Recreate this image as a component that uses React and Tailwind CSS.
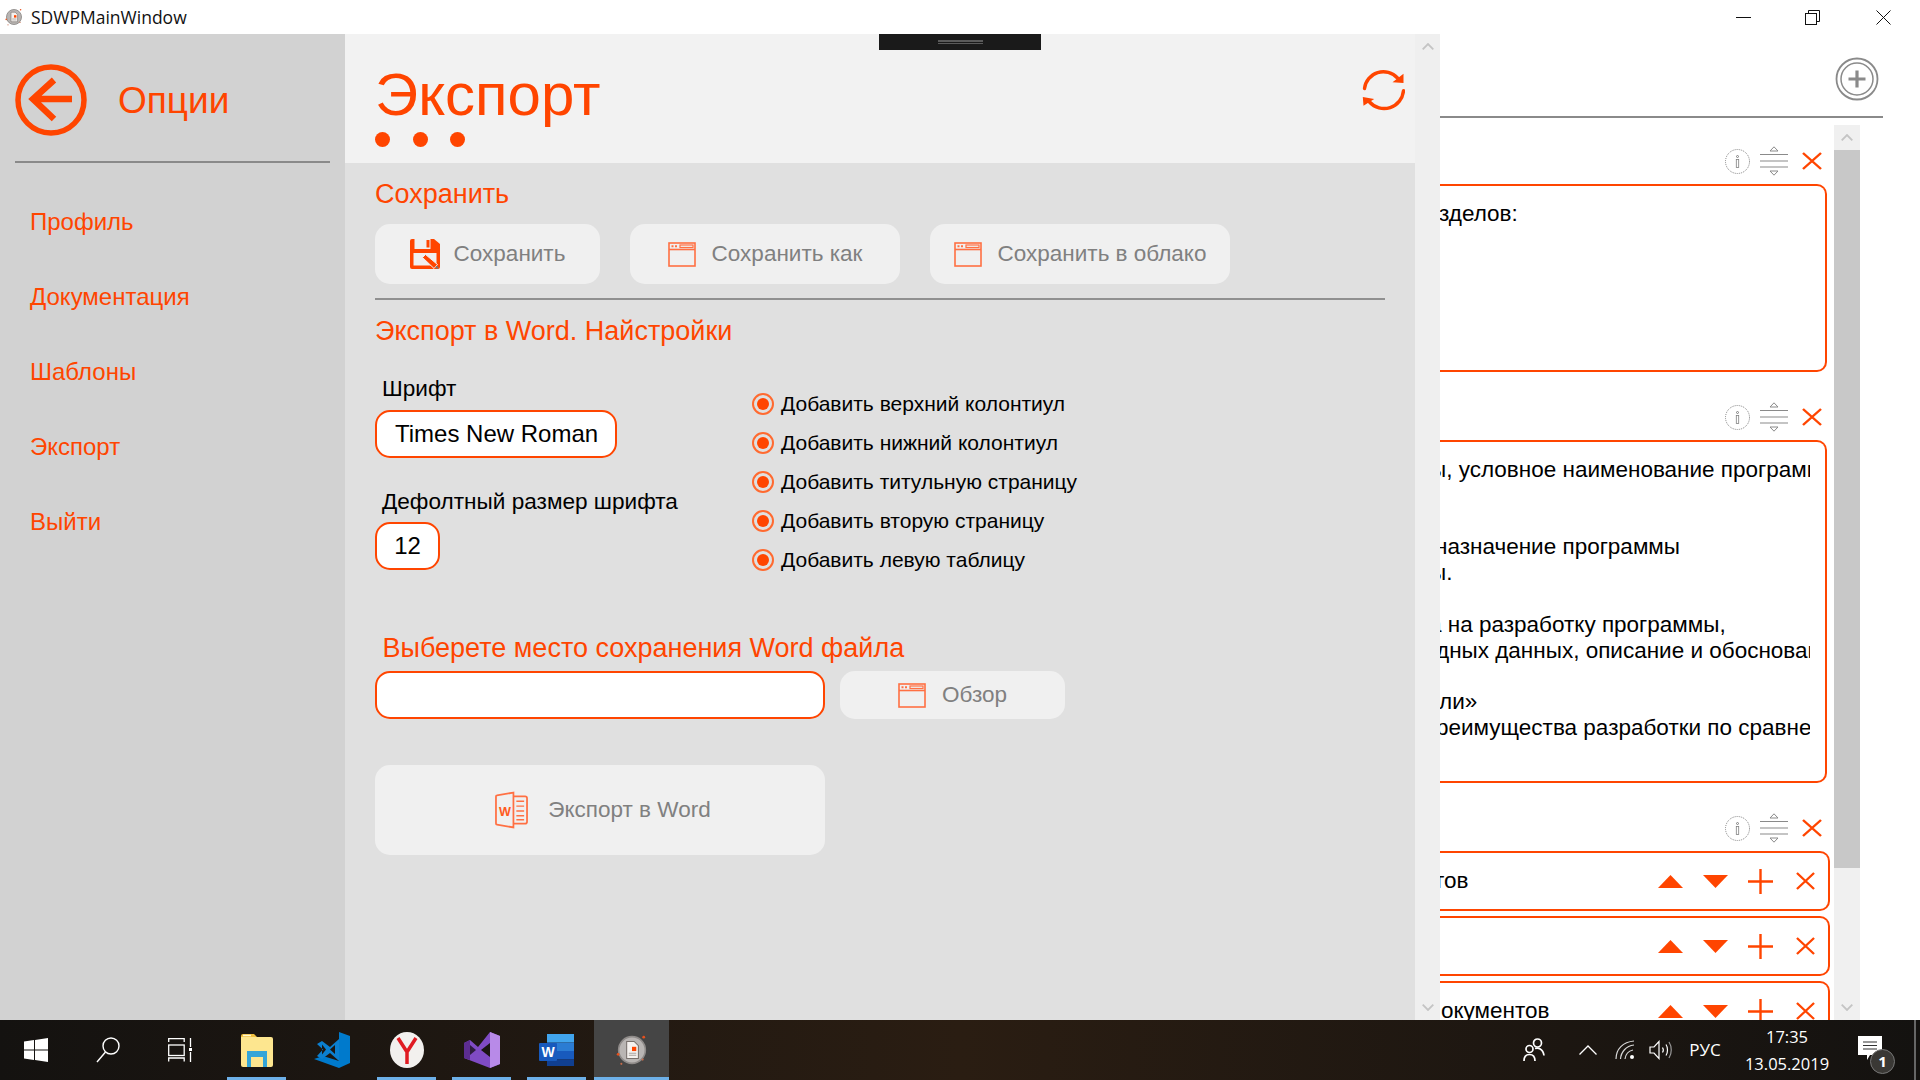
const navItems = ['Профиль', 'Документация', 'Шаблоны', 'Экспорт', 'Выйти'];
const radioItems = [
  'Добавить верхний колонтиул',
  'Добавить нижний колонтиул',
  'Добавить титульную страницу',
  'Добавить вторую страницу',
  'Добавить левую таблицу',
];

function AppIcon({ className }) {
  return (
    <svg viewBox="0 0 30 30" className={className}>
      <circle cx="15" cy="15" r="12.5" fill="#b9b5b3" stroke="#8f8b89" strokeWidth="1.5" />
      <path d="M10 7h7l4 4v12H10z" fill="#f4f1ee" stroke="#77706c" />
      <rect x="15" y="12" width="4" height="4" fill="#ff4500" />
      <path d="M12 18h7M12 20h7" stroke="#a9a29e" />
      <circle cx="26" cy="3" r="1.3" fill="#e8501c" />
      <circle cx="2" cy="19" r="1.3" fill="#e8501c" />
      <circle cx="5" cy="28" r="1" fill="#c46a4a" />
      <circle cx="25" cy="24" r="1" fill="#c46a4a" />
    </svg>
  );
}

function BackIcon() {
  return (
    <svg viewBox="0 0 72 72" className="w-[72px] h-[72px] shrink-0" fill="none" stroke="#ff4500">
      <circle cx="36" cy="36" r="33" strokeWidth="5.5" />
      <path d="M57 35H18M39 16 18 35l21 20" strokeWidth="6.5" />
    </svg>
  );
}

function RefreshIcon() {
  return (
    <svg viewBox="0 0 42 42" className="w-[43px] h-[42px]" fill="none">
      <path d="M2 19.5A19 19 0 0 1 35 9" stroke="#ff4500" strokeWidth="3.4" strokeLinecap="round" />
      <path d="M41 21.7A19.5 19.5 0 0 1 7 33" stroke="#ff4500" strokeWidth="3.4" strokeLinecap="round" />
      <path d="M41 4.7V14l-11-.7zM.3 28l.7 8.7L11.7 30z" fill="#ff4500" />
    </svg>
  );
}

function FloppyIcon() {
  return (
    <svg viewBox="0 0 30 30" className="w-[30px] h-[30px]">
      <path d="M2 0h22l6 5v23a2 2 0 0 1-2 2H2a2 2 0 0 1-2-2V2a2 2 0 0 1 2-2z" fill="#ff4500" />
      <rect x="4.500" y="0" width="16" height="10" fill="#f0f0f0" />
      <rect x="16.500" y="1" width="3" height="7.500" fill="#ff4500" />
      <rect x="3.500" y="14" width="23" height="12.500" fill="#f0f0f0" />
      <path d="M12.500 18.500l3-3 12 10-3.500 4z" fill="#ff4500" stroke="#f0f0f0" strokeWidth="1" />
      <path d="M26 27.500l2 2" stroke="#777" strokeWidth="2" />
    </svg>
  );
}

function WindowIcon() {
  return (
    <svg viewBox="0 0 28 25" className="w-[28px] h-[25px]" fill="none" stroke="#ff7043" strokeWidth="1.6">
      <rect x="1" y="1" width="26" height="23" />
      <path d="M1 7.500h26" />
      <rect x="12" y="3" width="13" height="2.500" strokeWidth="1.200" />
      <path d="M3.500 4.300h2M7 4.300h2" strokeWidth="2" />
    </svg>
  );
}

function WordDocIcon() {
  return (
    <svg viewBox="0 0 34 38" className="w-[33px] h-[38px]" fill="none" stroke="#ff7043" strokeWidth="1.8">
      <path d="M19 5h12a2 2 0 0 1 2 2v24a2 2 0 0 1-2 2H19" />
      <path d="M19 1 2 4a1 1 0 0 0-1 1v28a1 1 0 0 0 1 1l17 3z" />
      <path d="M22 10h8M22 15h8M22 20h8M22 25h8M22 29h8" strokeWidth="1.500" />
      <text x="4" y="25" fontSize="13" fontWeight="700" fill="#ff5a20" stroke="none" fontFamily="Liberation Sans">W</text>
    </svg>
  );
}

function InfoIcon() {
  return (
    <svg viewBox="0 0 25 25" className="w-[25px] h-[25px]" fill="none" stroke="#808080">
      <circle cx="12.500" cy="12.500" r="12" strokeDasharray="1 1" />
      <circle cx="12.500" cy="7.500" r="1" />
      <rect x="11.300" y="10.500" width="2.400" height="8" strokeWidth="0.800" />
    </svg>
  );
}

function CollapseIcon() {
  return (
    <svg viewBox="0 0 28 30" className="w-[28px] h-[30px]" fill="none" stroke="#8a8a8a">
      <path d="M14 .8 18 5h-8zM14 29.200 10 25h8z" />
      <path d="M0 8.500h28M0 15h28M0 21h28" strokeWidth="1.200" />
    </svg>
  );
}

function CloseIcon({ className }) {
  return (
    <svg viewBox="0 0 20 20" className={className} fill="none" stroke="#ff4500" strokeWidth="2.400" preserveAspectRatio="none">
      <path d="M1 1l18 18M19 1 1 19" />
    </svg>
  );
}

function CardIcons() {
  return (
    <div className="h-[46px] flex items-center justify-end pr-[12px]">
      <InfoIcon />
      <div className="w-[10px]" />
      <CollapseIcon />
      <div className="w-[14px]" />
      <CloseIcon className="w-[20px] h-[18px]" />
    </div>
  );
}

function RowIcons() {
  return (
    <div className="flex items-center">
      <div className="w-[45px] flex justify-center">
        <svg viewBox="0 0 25 13" className="w-[25px] h-[13px]"><path d="M12.500 0 25 13H0z" fill="#ff4500" /></svg>
      </div>
      <div className="w-[45px] flex justify-center">
        <svg viewBox="0 0 25 13" className="w-[25px] h-[13px]"><path d="M12.500 13 0 0h25z" fill="#ff4500" /></svg>
      </div>
      <div className="w-[45px] flex justify-center">
        <svg viewBox="0 0 25 25" className="w-[25px] h-[25px]" fill="none" stroke="#ff4500" strokeWidth="2.400"><path d="M12.500 0v25M0 12.500h25" /></svg>
      </div>
      <div className="w-[45px] flex justify-center">
        <CloseIcon className="w-[19px] h-[18px]" />
      </div>
    </div>
  );
}

function ActionButton({ icon, label, className }) {
  return (
    <div className={`bg-[#f0f0f0] rounded-[15px] flex items-center justify-center text-[#808080] text-[22.500px] ${className}`}>
      {icon}
      <span>{label}</span>
    </div>
  );
}

function ScrollArrow({ up }) {
  return (
    <div className="h-[25px] flex items-center justify-center">
      <svg viewBox="0 0 12 7" className="w-[12px] h-[7px]" fill="none" stroke="#c4c4c4" strokeWidth="1.800">
        <path d={up ? 'M.7 6.300 6 1l5.300 5.300' : 'M.7.700 6 6l5.300-5.300'} />
      </svg>
    </div>
  );
}

function TaskCell({ children, active, underline }) {
  return (
    <div className={`relative w-[75px] h-full flex items-center justify-center ${active ? 'bg-[#454545]' : ''}`}>
      {children}
      {underline && <div className={`absolute bottom-0 h-[3px] bg-[#6db0e8] ${active ? 'inset-x-0' : 'inset-x-[8px]'}`} />}
    </div>
  );
}

function Taskbar() {
  return (
    <div className="h-[60px] shrink-0 flex text-white bg-gradient-to-r from-[#141210] via-[#2a1d12] to-[#141210] font-['Open_Sans',sans-serif]">
      <div className="w-[72px] h-full flex items-center justify-center">
        <svg viewBox="0 0 24 24" className="w-[24px] h-[24px]" fill="#fff">
          <path d="M0 3.400 10 2v9.500H0zM11 1.900 24 0v11.500H11zM0 12.500h10V22L0 20.600zM11 12.500h13V24l-13-1.900z" />
        </svg>
      </div>
      <div className="w-[72px] h-full flex items-center justify-center">
        <svg viewBox="0 0 24 26" className="w-[24px] h-[26px]" fill="none" stroke="#fff" strokeWidth="1.400">
          <circle cx="15" cy="9" r="8" />
          <path d="M9.500 15 1 25" />
        </svg>
      </div>
      <div className="w-[72px] h-full flex items-center justify-center">
        <svg viewBox="0 0 24 24" className="w-[24px] h-[24px]" fill="none" stroke="#fff" strokeWidth="1.300">
          <path d="M.7 4V.7h15.500V4M.7 23.500V20h15.500v3.500" />
          <rect x=".7" y="7" width="15.500" height="10.500" />
          <path d="M22.500 0v9M22.500 14v10" />
          <rect x="21" y="10" width="3" height="3" fill="#fff" stroke="none" />
        </svg>
      </div>
      <div className="w-[3px]" />
      <TaskCell underline>
        <svg viewBox="0 0 32 34" className="w-[32px] h-[34px]">
          <path d="M0 3a2 2 0 0 1 2-2h11l3 3H0z" fill="#f0c040" />
          <path d="M0 4h30a2 2 0 0 1 2 2v26a2 2 0 0 1-2 2H2a2 2 0 0 1-2-2z" fill="#fde68f" />
          <path d="M2 2.500h8" stroke="#fff7cf" strokeWidth="1.500" />
          <path d="M6 34V18h20v16h-4V24H10v10z" fill="#34a5d8" />
        </svg>
      </TaskCell>
      <TaskCell>
        <svg viewBox="0 0 36 36" className="w-[36px] h-[36px]">
          <path d="M25 0l11 4v27l-11 5-25-9 9-3 16 5V0z" fill="#007acc" />
          <path d="M3 12l5-3 8 6 9-8v22l-9-8-8 6-5-3 6-6.500zM8 12.500v10l4-5zM21 13l-5 4.500 5 4.500z" fill="#0b7fd0" fillRule="evenodd" />
        </svg>
      </TaskCell>
      <TaskCell underline>
        <svg viewBox="0 0 34 36" className="w-[34px] h-[36px]" fill="none">
          <ellipse cx="17" cy="18" rx="17" ry="18" fill="#f2f0ee" />
          <path d="M8 6l9 14 9-14M17 20v12" stroke="#e01b22" strokeWidth="3.500" />
        </svg>
      </TaskCell>
      <TaskCell underline>
        <svg viewBox="0 0 36 36" className="w-[36px] h-[36px]">
          <path d="M26 0l10 4v28l-10 4-26-10V11l6-3 8 7z" fill="#7f4bc4" />
          <path d="M26 0l10 4v28l-10 4z" fill="#b88ae8" />
          <path d="M0 11l6-3v20l-6-2z" fill="#5c2d91" />
          <path d="M6 13v10l6-5z" fill="#2e1d3f" />
          <path d="M26 11v14l-9-7z" fill="#1a1512" />
        </svg>
      </TaskCell>
      <TaskCell underline>
        <svg viewBox="0 0 36 36" className="w-[36px] h-[36px]">
          <rect x="8" y="2" width="27" height="8.500" fill="#41a5ee" />
          <rect x="8" y="10.500" width="27" height="8.500" fill="#2b7cd3" />
          <rect x="8" y="19" width="27" height="8.500" fill="#185abd" />
          <rect x="8" y="27.500" width="27" height="6.500" fill="#103f91" />
          <rect x="0" y="11" width="18" height="18" rx="1" fill="#185abd" />
          <text x="9" y="25" textAnchor="middle" fontSize="14" fontWeight="700" fill="#fff" fontFamily="Liberation Sans">W</text>
        </svg>
      </TaskCell>
      <TaskCell active underline>
        <AppIcon className="w-[32px] h-[36px]" />
      </TaskCell>
      <div className="flex-1" />
      <div className="w-[48px] flex items-center justify-center">
        <svg viewBox="0 0 22 24" className="w-[22px] h-[24px]" fill="none" stroke="#fff" strokeWidth="1.700">
          <circle cx="14.500" cy="5" r="4" />
          <circle cx="6.500" cy="11" r="3.500" />
          <path d="M1 23c0-4 2-6.500 5.500-6.500S12 19 12 23M12 10.500c3-1 8 0 9 7" />
        </svg>
      </div>
      <div className="w-[12px]" />
      <div className="w-[36px] flex items-center justify-center">
        <svg viewBox="0 0 18 10" className="w-[18px] h-[10px]" fill="none" stroke="#fff" strokeWidth="1.300"><path d="M.5 9.500 9 1l8.500 8.500" /></svg>
      </div>
      <div className="w-[37px] flex items-center justify-center">
        <svg viewBox="0 0 20 20" className="w-[20px] h-[20px]" fill="none" stroke="#d8d8d8" strokeWidth="1.200">
          <path d="M1 19C1 9 8 2 19 1M5.500 19C6 12 11 6 19 5M10 19c.5-4 3-8 8-9" />
          <circle cx="17" cy="17" r="2" fill="#fff" stroke="none" />
        </svg>
      </div>
      <div className="w-[35px] flex items-center justify-center">
        <svg viewBox="0 0 23 20" className="w-[23px] h-[20px]" fill="none" stroke="#fff" strokeWidth="1.200">
          <path d="M1 7h4l5-5.500v17L5 13H1z" />
          <path d="M13.500 7.500c1 1.500 1 3.500 0 5M17 4.500c2 3 2 8 0 11" />
          <path d="M20 2c3 4.500 3 11.500 0 16" stroke="#999" />
        </svg>
      </div>
      <div className="w-[54px] flex items-center justify-center text-[17px]">РУС</div>
      <div className="w-[110px] flex flex-col items-center justify-center text-[16.500px] leading-[27px]">
        <span>17:35</span>
        <span>13.05.2019</span>
      </div>
      <div className="w-[4px]" />
      <div className="relative w-[48px] flex items-center justify-center">
        <svg viewBox="0 0 24 24" className="w-[24px] h-[24px] -mt-[4px]">
          <path d="M0 0h24v19H12l-3 5v-5H0z" fill="#fff" />
          <path d="M5 6h14M5 9.500h14M5 13h14" stroke="#333" strokeWidth="1.200" />
        </svg>
        <div className="absolute left-[24px] top-[29px] w-[25px] h-[25px] rounded-full bg-[#3a3835] border border-[#777] flex items-center justify-center text-[15px] font-bold">1</div>
      </div>
      <div className="w-[20px]" />
      <div className="w-[2px] bg-[#666]" />
      <div className="w-[4px]" />
    </div>
  );
}

export default function App() {
  return (
    <div className="w-[1920px] h-[1080px] overflow-hidden flex flex-col bg-white font-['Liberation_Sans',sans-serif]">
      {/* title bar */}
      <div className="h-[34px] shrink-0 flex items-center pl-[5px] font-['Open_Sans',sans-serif]">
        <AppIcon className="w-[18px] h-[18px]" />
        <span className="ml-[8px] text-[17.500px] text-[#111]">SDWPMainWindow</span>
        <div className="flex-1" />
        <svg viewBox="0 0 15 1" className="w-[15px] h-[1px]"><rect width="15" height="1" fill="#111" /></svg>
        <div className="w-[54px]" />
        <svg viewBox="0 0 15 15" className="w-[15px] h-[15px]" fill="none" stroke="#111"><path d="M3.500 3V.500H14.500V11.500H12" /><rect x=".5" y="3.500" width="11" height="11" /></svg>
        <div className="w-[56px]" />
        <svg viewBox="0 0 15 15" className="w-[15px] h-[15px]" fill="none" stroke="#111"><path d="M.5.500l14 14M14.500.500l-14 14" /></svg>
        <div className="w-[29px]" />
      </div>

      <div className="relative flex-1 min-h-0 flex">
        {/* options panel */}
        <div className="w-[1440px] shrink-0 flex">
          <div className="w-[345px] shrink-0 bg-[#d2d2d2] px-[15px]">
            <div className="h-[129px] pt-[4px] flex items-center border-b-2 border-[#8a8a8a]">
              <BackIcon />
              <span className="ml-[31px] text-[37px] leading-[44px] pt-[2px] text-[#ff4500]">Опции</span>
            </div>
            <div className="mt-[21px] pl-[15px]">
              {navItems.map((item) => (
                <div key={item} className="h-[75px] flex items-center text-[24px] text-[#ff4500]">{item}</div>
              ))}
            </div>
          </div>

          <div className="w-[1070px] shrink-0 flex flex-col bg-[#e0e0e0]">
            <div className="h-[129px] shrink-0 bg-[#f2f2f2] pl-[30px] pr-[10px] pt-[26px] flex justify-between">
              <div>
                <div className="text-[60px] leading-[70px] text-[#ff4500]">Экспорт</div>
                <div className="mt-[2px] flex gap-[22.5px]">
                  <div className="w-[15px] h-[15px] rounded-full bg-[#ff4500]" />
                  <div className="w-[15px] h-[15px] rounded-full bg-[#ff4500]" />
                  <div className="w-[15px] h-[15px] rounded-full bg-[#ff4500]" />
                </div>
              </div>
              <div className="pt-[9px]"><RefreshIcon /></div>
            </div>

            <div className="pl-[30px] pr-[30px]">
              <div className="pt-[16px] text-[27px] leading-[30px] text-[#ff4500]">Сохранить</div>
              <div className="mt-[15px] flex gap-[30px]">
                <ActionButton className="w-[225px] h-[60px] gap-[14px]" icon={<FloppyIcon />} label="Сохранить" />
                <ActionButton className="w-[270px] h-[60px] gap-[16px]" icon={<WindowIcon />} label="Сохранить как" />
                <ActionButton className="w-[300px] h-[60px] gap-[16px]" icon={<WindowIcon />} label="Сохранить в облако" />
              </div>
              <div className="mt-[14px] h-[2px] bg-[#909090]" />
              <div className="mt-[16px] text-[27px] leading-[30px] text-[#ff4500]">Экспорт в Word. Найстройки</div>

              <div className="mt-[28px] flex">
                <div className="w-[377px] shrink-0">
                  <div className="pl-[7px] text-[22.600px] leading-[30px] text-black">Шрифт</div>
                  <div className="mt-[6px] w-[242px] h-[48px] rounded-[15px] border-2 border-[#ff4500] bg-white flex items-center pl-[18px] text-[24px] text-black">Times New Roman</div>
                  <div className="mt-[29px] pl-[7px] text-[22.600px] leading-[30px] text-black">Дефолтный размер шрифта</div>
                  <div className="mt-[5px] w-[65px] h-[48px] rounded-[15px] border-2 border-[#ff4500] bg-white flex items-center justify-center text-[24px] text-black">12</div>
                </div>
                <div className="mt-[10px]">
                  {radioItems.map((item) => (
                    <div key={item} className="h-[39px] flex items-center gap-[7px]">
                      <div className="w-[22px] h-[22px] rounded-full border-2 border-[#ff6a30] flex items-center justify-center">
                        <div className="w-[12px] h-[12px] rounded-full bg-[#ff4500]" />
                      </div>
                      <span className="text-[21px] text-black">{item}</span>
                    </div>
                  ))}
                </div>
              </div>

              <div className="mt-[54px] pl-[7.500px] text-[27px] leading-[30px] text-[#ff4500]">Выберете место сохранения Word файла</div>
              <div className="mt-[8px] flex gap-[15px]">
                <div className="w-[450px] h-[48px] rounded-[15px] border-2 border-[#ff4500] bg-white" />
                <ActionButton className="w-[225px] h-[48px] gap-[16px]" icon={<WindowIcon />} label="Обзор" />
              </div>
              <ActionButton className="mt-[46px] w-[450px] h-[90px] gap-[20px] pl-[6px]" icon={<WordDocIcon />} label="Экспорт в Word" />
            </div>
          </div>

          <div className="w-[25px] shrink-0 bg-[#efefef] flex flex-col justify-between">
            <ScrollArrow up />
            <ScrollArrow />
          </div>
        </div>

        {/* main window behind the options panel */}
        <div className="w-[480px] shrink-0 flex flex-col overflow-hidden">
          <div className="h-[84px] shrink-0 mr-[37px] border-b-2 border-[#8a8a8a] flex justify-end items-start">
            <svg viewBox="0 0 44 44" className="w-[44px] h-[44px] mt-[23px] mr-[4px]" fill="none" stroke="#8a8a8a">
              <circle cx="22" cy="22" r="20.500" strokeWidth="1.800" />
              <circle cx="22" cy="22" r="16" strokeWidth="1.500" />
              <path d="M22 13.500v17M13.500 22h17" strokeWidth="3.200" />
            </svg>
          </div>
          <div className="flex-1 min-h-0 flex">
            <div className="w-[394px] shrink-0 pt-[20px] overflow-hidden">
              <CardIcons />
              <div className="w-[387px] h-[188px] border-y-2 border-r-2 border-[#ff4500] rounded-r-[10px] pt-[15px] text-[22.500px] leading-[25.800px] text-black whitespace-nowrap">
                <div className="w-[370px] overflow-hidden">
                  <div className="-ml-[1px]">зделов:</div>
                </div>
              </div>
              <div className="mt-[22px]"><CardIcons /></div>
              <div className="w-[387px] h-[343px] border-y-2 border-r-2 border-[#ff4500] rounded-r-[10px] pt-[15px] text-[22.500px] leading-[25.800px] text-black whitespace-nowrap">
                <div className="w-[370px] overflow-hidden">
                  <div className="-ml-[10px]">ы, условное наименование программы</div>
                  <div className="h-[51.600px]" />
                  <div className="-ml-[5px]">назначение программы</div>
                  <div className="-ml-[10px]">ы.</div>
                  <div className="h-[25.800px]" />
                  <div className="-ml-[11px]">а на разработку программы,</div>
                  <div className="-ml-[4px]">дных данных, описание и обоснование</div>
                  <div className="h-[25.800px]" />
                  <div className="-ml-[1px]">ли»</div>
                  <div className="-ml-[4px]">реимущества разработки по сравнению</div>
                </div>
              </div>
              <div className="mt-[22px]"><CardIcons /></div>
              <div className="flex flex-col gap-[5px]">
                <div className="w-[390px] h-[60px] shrink-0 border-y-2 border-r-2 border-[#ff4500] rounded-r-[10px] flex items-center justify-between text-[22.500px] text-black">
                  <span className="-ml-[6px]">тов</span>
                  <RowIcons />
                </div>
                <div className="w-[390px] h-[60px] shrink-0 border-y-2 border-r-2 border-[#ff4500] rounded-r-[10px] flex items-center justify-end">
                  <RowIcons />
                </div>
                <div className="w-[390px] h-[60px] shrink-0 border-y-2 border-r-2 border-[#ff4500] rounded-r-[10px] flex items-center justify-between text-[22.500px] text-black">
                  <span className="ml-[1px]">окументов</span>
                  <RowIcons />
                </div>
              </div>
            </div>
            <div className="w-[26px] shrink-0 mt-[7px] flex flex-col bg-[#f0f0f0]">
              <ScrollArrow up />
              <div className="h-[718px] bg-[#c8c8c8]" />
              <div className="flex-1" />
              <ScrollArrow />
            </div>
          </div>
        </div>

        {/* drag handle over the top of the page */}
        <div className="absolute left-[879px] top-0 w-[162px] h-[16px] bg-[#1a1a1a] flex flex-col items-center justify-center gap-[1px]">
          <div className="w-[45px] h-[2px] bg-[#5a5a5a]" />
          <div className="w-[45px] h-[1px] bg-[#5a5a5a]" />
        </div>
      </div>

      <Taskbar />
    </div>
  );
}
